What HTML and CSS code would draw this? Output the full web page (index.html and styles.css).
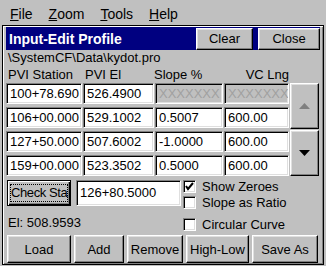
FILE: index.html
```html
<!DOCTYPE html>
<html>
<head>
    <title>Input-Edit Profile</title>
    <link rel="stylesheet" href="styles.css">
</head>
<body>
    <div class="menubar">
        <span><u>F</u>ile</span>
        <span><u>Z</u>oom</span>
        <span><u>T</u>ools</span>
        <span><u>H</u>elp</span>
    </div>

    <div class="window">
        <div class="titlebar">
            <span class="title">Input-Edit Profile</span>
            <button class="btn clear-btn">Clear</button>
            <button class="btn close-btn">Close</button>
        </div>

        <div class="path">\SystemCF\Data\kydot.pro</div>

        <div class="heads">
            <span>PVI Station</span>
            <span>PVI El</span>
            <span class="head-slope">Slope %</span>
            <span class="head-vc">VC Lng</span>
        </div>

        <div class="table">
            <div class="cell">100+78.690</div>
            <div class="cell">526.4900</div>
            <div class="cell disabled">XXXXXXX</div>
            <div class="cell disabled">XXXXXXX</div>

            <div class="scroll">
                <button class="btn scroll-btn">
                    <svg width="11" height="6" viewBox="0 0 11 6"><polygon points="5.5,0 11,6 0,6" fill="#808080"/></svg>
                </button>
                <button class="btn scroll-btn">
                    <svg width="11" height="6" viewBox="0 0 11 6"><polygon points="0,0 11,0 5.5,6" fill="#000"/></svg>
                </button>
            </div>

            <div class="cell">106+00.000</div>
            <div class="cell">529.1002</div>
            <div class="cell">0.5007</div>
            <div class="cell">600.00</div>

            <div class="cell">127+50.000</div>
            <div class="cell">507.6002</div>
            <div class="cell">-1.0000</div>
            <div class="cell">600.00</div>

            <div class="cell">159+00.000</div>
            <div class="cell">523.3502</div>
            <div class="cell">0.5000</div>
            <div class="cell">600.00</div>
        </div>

        <div class="lower">
            <div class="left-col">
                <div class="check-row">
                    <button class="btn default-btn"><span class="focus">Check Sta</span></button>
                    <div class="cell station">126+80.5000</div>
                </div>
                <div class="elev">El: 508.9593</div>
            </div>
            <div class="options">
                <div class="option">
                    <span class="box">
                        <svg width="9" height="9" viewBox="0 0 9 9"><polyline points="1,4 3,7 8,1" fill="none" stroke="#000" stroke-width="2"/></svg>
                    </span>
                    Show Zeroes
                </div>
                <div class="option">
                    <span class="box"></span>
                    Slope as Ratio
                </div>
                <div class="option circular">
                    <span class="box"></span>
                    Circular Curve
                </div>
            </div>
        </div>

        <div class="actions">
            <button class="btn load-btn">Load</button>
            <button class="btn add-btn">Add</button>
            <button class="btn remove-btn">Remove</button>
            <button class="btn hilo-btn">High-Low</button>
            <button class="btn save-btn">Save As</button>
        </div>
    </div>
</body>
</html>
```

FILE: styles.css
```css
body {
    margin: 0;
    background: #c0c0c0;
    font-family: "Liberation Sans", Arial, sans-serif;
    font-size: 13px;
    color: #000;
    width: 326px;
    height: 266px;
    overflow: hidden;
}
.menubar {
    height: 25px;
    display: flex;
    align-items: center;
    gap: 16px;
    padding-left: 10px;
    padding-top: 2px;
    box-sizing: border-box;
    font-size: 14px;
}
.window {
    margin-left: 2px;
    width: 322px;
    box-sizing: border-box;
    border: 1px solid #000;
    box-shadow: inset 1px 1px #fff, inset -1px -1px #808080;
    padding: 1px 3px 1px 3px;
}
.titlebar {
    height: 23px;
    background: #000080;
    display: flex;
    align-items: center;
}
.title {
    color: #fff;
    font-weight: bold;
    font-size: 14px;
    padding-left: 3px;
    flex: 1;
}
.btn {
    font-family: "Liberation Sans", Arial, sans-serif;
    font-size: 13px;
    color: #000;
    background: #c0c0c0;
    border: 1px solid;
    border-color: #fff #000 #000 #fff;
    box-shadow: inset -1px -1px #808080, inset 1px 1px #dfdfdf;
    padding: 0;
    margin: 0;
    box-sizing: border-box;
}
.clear-btn {
    width: 57px;
    height: 22px;
    margin-right: 5px;
}
.close-btn {
    width: 62px;
    height: 22px;
}
.path {
    line-height: 16px;
    padding-left: 2px;
}
.heads {
    display: grid;
    grid-template-columns: 76px 71px 68px 65px;
    column-gap: 1px;
    line-height: 17px;
}
.heads span {
    padding-left: 2px;
}
.head-slope {
    margin-left: -3px;
}
.head-vc {
    text-align: right;
}
.table {
    display: grid;
    grid-template-columns: 76px 71px 68px 65px 29px;
    grid-template-rows: repeat(4, 21px);
    column-gap: 1px;
    row-gap: 3px;
}
.cell {
    background: #fff;
    border: 1px solid;
    border-color: #808080 #fff #fff #808080;
    box-shadow: inset 1px 1px #000, inset -1px -1px #dfdfdf;
    box-sizing: border-box;
    padding-left: 3px;
    line-height: 19px;
    white-space: nowrap;
    overflow: hidden;
}
.cell.disabled {
    background: #c0c0c0;
    color: #a0a0a0;
}
.scroll {
    grid-column: 5;
    grid-row: 1 / span 4;
    display: flex;
    flex-direction: column;
    gap: 1px;
}
.scroll-btn {
    flex: 1;
    display: flex;
    align-items: center;
    justify-content: center;
}
.lower {
    display: flex;
    margin-top: 2px;
}
.left-col {
    width: 177px;
    padding-top: 2px;
}
.check-row {
    display: flex;
    height: 26px;
}
.default-btn {
    width: 64px;
    height: 26px;
    margin-left: 1px;
    border: 1px solid #000;
    box-shadow: inset 1px 1px #fff, inset -1px -1px #000, inset -2px -2px #808080;
    padding: 3px 2px;
    overflow: hidden;
}
.focus {
    display: block;
    border: 1px dotted #000;
    line-height: 16px;
    white-space: nowrap;
    letter-spacing: -0.4px;
    text-align: left;
}
.station {
    width: 105px;
    height: 26px;
    margin-left: 5px;
    line-height: 24px;
}
.elev {
    margin-top: 9px;
    line-height: 16px;
    padding-left: 2px;
}
.options {
    display: flex;
    flex-direction: column;
}
.option {
    display: flex;
    align-items: center;
    gap: 6px;
    height: 16px;
}
.option.circular {
    margin-top: 6px;
}
.box {
    width: 13px;
    height: 13px;
    box-sizing: border-box;
    background: #fff;
    border: 1px solid;
    border-color: #808080 #fff #fff #808080;
    box-shadow: inset 1px 1px #000, inset -1px -1px #dfdfdf;
    display: flex;
    align-items: center;
    justify-content: center;
}
.actions {
    display: flex;
    gap: 3px;
    margin-top: 3px;
    padding-left: 1px;
}
.actions .btn {
    height: 28px;
}
.load-btn {
    width: 64px;
}
.add-btn {
    width: 50px;
}
.remove-btn {
    width: 56px;
}
.hilo-btn {
    width: 63px;
}
.save-btn {
    width: 66px;
}
```
